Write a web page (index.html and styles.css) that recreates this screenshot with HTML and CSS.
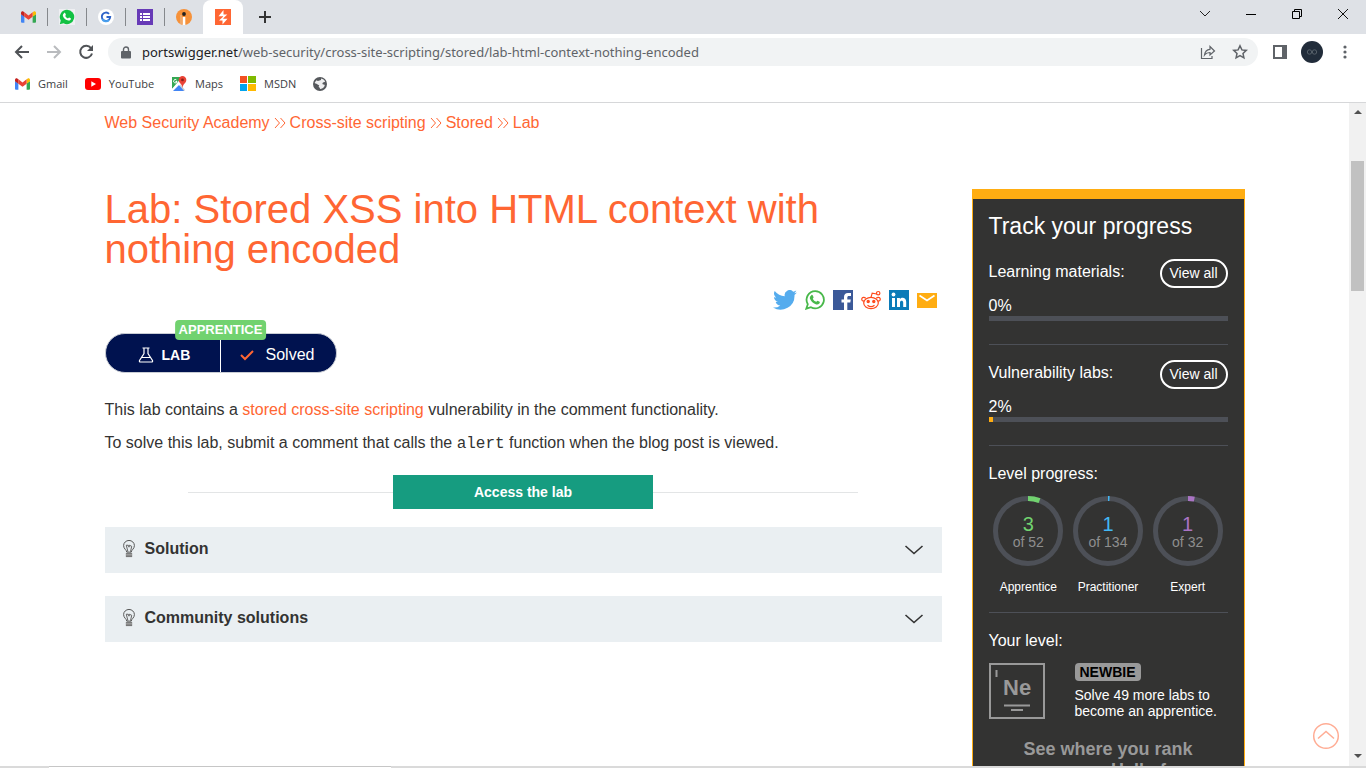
FILE: index.html
```html
<!DOCTYPE html>
<html lang="en">
<head>
<meta charset="utf-8">
<meta name="viewport" content="width=device-width, initial-scale=1">
<title>Lab: Stored XSS into HTML context with nothing encoded</title>
<link rel="stylesheet" href="styles.css">
</head>
<body>
<svg class="defs" aria-hidden="true">
  <symbol id="gmail" viewBox="0 0 16 12">
    <path fill="#4285f4" d="M1 12h2.600V5.500L0 2.800V11a1 1 0 0 0 1 1z"/>
    <path fill="#34a853" d="M12.400 12H15a1 1 0 0 0 1-1V2.800l-3.600 2.700z"/>
    <path fill="#fbbc04" d="M12.400 1v4.800L16 3V1.600C16 .2 14.400-.5 13.300.3z"/>
    <path fill="#ea4335" d="M3.600 5.800V1L8 4.300 12.400 1v4.800L8 9z"/>
    <path fill="#c5221f" d="M0 1.600V3l3.600 2.800V1L2.700.3C1.600-.5 0 .2 0 1.600z"/>
  </symbol>
  <symbol id="phone" viewBox="0 0 20 20">
    <path d="M6.300 5.200c.5-.6 1.200-.4 1.500.2l.8 1.800c.1.400-.7 1.200-.8 1.500.7 1.500 1.900 2.500 3.400 3.100.3 0 1-1.200 1.400-1.100l2 1c.5.3.1 1.500-.3 1.900-1 .9-2.300 1-3.600.6-2.700-.8-5-3-5.800-5.600-.3-1.300.3-2.500 1.400-3.400z"/>
  </symbol>
  <symbol id="bulb" viewBox="0 0 14 20">
    <path d="M4.500 13.500c0-2.500-3.500-3.500-3.500-7.300a6 5.700 0 0 1 12 0c0 3.800-3.500 4.800-3.500 7.300z" fill="none" stroke="#555" stroke-width="1.100"/>
    <path d="M5.800 13 4 5.800h2.200L7 8l.5-2.200L10 7l-1.300 6" fill="none" stroke="#555" stroke-width="1"/>
    <path d="M3.500 14.500h7V19h-7z" fill="#777"/><path d="M3.500 16.500h7" stroke="#ccc" stroke-width=".7"/>
  </symbol>
  <symbol id="chevron" viewBox="0 0 20 12"><path d="M1.500 2 10 9.500 18.500 2" fill="none" stroke="#333" stroke-width="1.600"/></symbol>
  <symbol id="raquo" viewBox="0 0 12 12"><path d="M1 1l4.500 5L1 11M6.500 1 11 6l-4.500 5" fill="none" stroke="#ff6633" stroke-width="1"/></symbol>
</svg>

<div class="window">
  <header class="chrome">
    <div class="tabstrip">
      <div class="tabs">
        <button class="tab" aria-label="Gmail"><svg width="15" height="12"><use href="#gmail"/></svg></button>
        <button class="tab" aria-label="WhatsApp"><svg width="16" height="16" viewBox="0 0 20 20"><path fill="#fff" d="M0 20V0h20v20z" opacity=".5"/><path fill="#12c143" d="M10 1a9 9 0 1 1-4.300 16.900L1 19l1.200-4.500A9 9 0 0 1 10 1z"/><use href="#phone" fill="#fff"/></svg></button>
        <button class="tab" aria-label="Google account"><svg width="16" height="16" viewBox="0 0 16 16"><circle cx="8" cy="8" r="8" fill="#fff"/><path d="M11 4.800A4.200 4.200 0 1 0 12.200 8H8.500" fill="none" stroke="#2d62c8" stroke-width="1.900"/><path d="M4.200 10A4.200 4.200 0 0 0 11 11" fill="none" stroke="#4aa0ee" stroke-width="1.900"/></svg></button>
        <button class="tab" aria-label="Forms"><svg width="16" height="16" viewBox="0 0 16 16"><path fill="#673ab7" d="M0 0h16v16H0z"/><path fill="#fff" d="M3 4h2v2H3zm3 0h7v2H6zM3 7h2v2H3zm3 0h7v2H6zm-3 3h2v2H3zm3 0h7v2H6z"/></svg></button>
        <button class="tab" aria-label="Info"><svg width="16" height="16" viewBox="0 0 16 16"><circle cx="8" cy="8" r="8" fill="#f69139"/><circle cx="8" cy="5" r="1.900" fill="#222"/><path fill="#fff" d="M6.700 8h2.600v8H6.700z"/><path fill="#dcdfe3" d="M4.500 6h1v9h-1z" opacity=".6"/></svg></button>
        <button class="tab tab-active" aria-label="PortSwigger"><svg width="16" height="16" viewBox="0 0 16 16"><path fill="#ff6633" d="M0 0h16v16H0z"/><path fill="#fff" d="M8.500 1v4.500h3.800L8 9.500V7.200H3.500zM7.500 15.500V11.500H4L8.300 7.500v2.300h4.200z"/></svg></button>
      </div>
      <button class="icon-btn newtab" aria-label="New tab"><svg width="12" height="12"><path d="M6 0v12M0 6h12" stroke="#333" stroke-width="2"/></svg></button>
      <div class="controls">
        <button class="icon-btn" aria-label="Search tabs"><svg width="12" height="12"><path d="m1 3 5 5 5-5" fill="none" stroke="#222"/></svg></button>
        <button class="icon-btn" aria-label="Minimize"><svg width="10" height="12"><path d="M0 6.500h10" stroke="#000"/></svg></button>
        <button class="icon-btn" aria-label="Restore"><svg width="10" height="10"><path d="M.5 2.500h7v7h-7zM2.500 2.500v-2h7v7h-2" fill="none" stroke="#000"/></svg></button>
        <button class="icon-btn" aria-label="Close"><svg width="12" height="12"><path d="m1 1 10 10M11 1 1 11" stroke="#111"/></svg></button>
      </div>
    </div>

    <div class="toolbar">
      <button class="icon-btn" aria-label="Back"><svg width="16" height="14"><path d="M15 7H2M8 1 2 7l6 6" fill="none" stroke="#505357" stroke-width="2"/></svg></button>
      <button class="icon-btn" aria-label="Forward"><svg width="16" height="14"><path d="M1 7h13M8 1l6 6-6 6" fill="none" stroke="#b9bbbe" stroke-width="2"/></svg></button>
      <button class="icon-btn" aria-label="Reload"><svg width="16" height="16"><path d="M13 4.200A6 6 0 1 0 14 9.500" fill="none" stroke="#505357" stroke-width="2"/><path fill="#505357" d="M15 1v6H9z"/></svg></button>
      <div class="omnibox">
        <svg width="10" height="13"><path fill="#5f6368" d="M1 5h8a1 1 0 0 1 1 1v5.500a1 1 0 0 1-1 1H1a1 1 0 0 1-1-1V6a1 1 0 0 1 1-1z"/><path d="M2.500 5.500V3.500a2.500 2.500 0 0 1 5 0v2" fill="none" stroke="#5f6368" stroke-width="1.400"/></svg>
        <div class="url" role="textbox" aria-label="Address"><span class="host">portswigger.net</span>/web-security/cross-site-scripting/stored/lab-html-context-nothing-encoded</div>
        <button class="icon-btn" aria-label="Share"><svg width="16" height="16" fill="none" stroke="#5f6368" stroke-width="1.200"><path d="M1.500 4v10.500h10.500V12"/><path d="M4.500 11C5 7 7 5.500 10 5.300V2.500L14.500 7 10 11V8.500C7.500 8.500 6 9 4.500 11z"/></svg></button>
        <button class="icon-btn" aria-label="Bookmark"><svg width="16" height="16"><path d="m8 1.800 1.900 4.100 4.400.5-3.300 3 .9 4.400L8 11.600l-3.900 2.200.9-4.400-3.300-3 4.400-.5z" fill="none" stroke="#5f6368" stroke-width="1.500"/></svg></button>
      </div>
      <div class="tools">
        <button class="icon-btn" aria-label="Side panel"><svg width="14" height="14"><path fill="#5f6368" d="M0 0h14v14H0z"/><path fill="#fff" d="M2 2h7v10H2z"/></svg></button>
        <button class="icon-btn" aria-label="Profile"><svg width="22" height="22"><circle cx="11" cy="11" r="11" fill="#212c3a"/><circle cx="8.500" cy="11" r="2.200" fill="none" stroke="#566069"/><circle cx="13.500" cy="11" r="2.200" fill="none" stroke="#566069"/></svg></button>
        <button class="icon-btn" aria-label="Menu"><svg width="4" height="14" fill="#5f6368"><circle cx="2" cy="2" r="1.600"/><circle cx="2" cy="7" r="1.600"/><circle cx="2" cy="12" r="1.600"/></svg></button>
      </div>
    </div>

    <nav class="bookmarks" aria-label="Bookmarks">
      <a href="#"><svg width="15" height="12"><use href="#gmail"/></svg>Gmail</a>
      <a href="#"><svg width="16" height="12"><rect width="16" height="12" rx="3" fill="#f00"/><path fill="#fff" d="m6.300 3.200 4.700 2.800-4.700 2.800z"/></svg>YouTube</a>
      <a href="#"><svg width="16" height="16" viewBox="0 0 16 16"><path fill="#34a853" d="M1 1h10L1 13z"/><path fill="#fff" d="M0 14 11 3l2 2L3 16z"/><path fill="#c8ccd0" d="M9 8l5 6-1 1H10z"/><path fill="#4285f4" d="M2 15l6-6 5 6z"/><path d="M5.500 4A1.700 1.700 0 1 0 6 5.500H4.500" fill="none" stroke="#fff"/><path fill="#ea4335" d="M11.500 0A3.800 3.800 0 0 1 15.300 4c0 3-3.200 3.500-3.800 8C11 7.500 7.700 7 7.700 4A3.800 3.800 0 0 1 11.500 0z"/><circle cx="11.500" cy="3.900" r="1.400" fill="#8c2118"/></svg>Maps</a>
      <a href="#"><svg width="16" height="16"><path fill="#f25022" d="M0 0h7v7H0z"/><path fill="#7fba00" d="M8 0h8v7H8z"/><path fill="#00a4ef" d="M0 8h7v7H0z"/><path fill="#ffb900" d="M8 8h8v7H8z"/></svg>MSDN</a>
      <a href="#" aria-label="Web page"><svg width="14" height="14"><circle cx="7" cy="7" r="7" fill="#55585c"/><path fill="#fff" d="M8 1.500c2 .3 3.500 1.500 4.200 3-1 .8-2 .5-2.600 1.500-.6 1 .4 1.500 1.400 1.500.8 0 1 1 .3 2-.8 1.500-2.300 2.500-4.300 2.600 0-1-.2-1.500-1-1.800-.5-.3-.3-1.300.3-1.800L3 6.500c-.7-.2-1.400-.5-1.300-.8.5-1 1-1.700 1.800-2.500.7.600 1.500 1 2.200.6L8 3z" opacity=".9"/></svg></a>
    </nav>
  </header>

  <div class="viewport">
    <div class="page">
      <nav class="crumbs" aria-label="Breadcrumb">
        <a href="#">Web Security Academy</a><svg width="12" height="12"><use href="#raquo"/></svg><a href="#">Cross-site scripting</a><svg width="12" height="12"><use href="#raquo"/></svg><a href="#">Stored</a><svg width="12" height="12"><use href="#raquo"/></svg><a href="#">Lab</a>
      </nav>
      <div class="columns">
        <main>
          <h1>Lab: Stored XSS into HTML context with nothing encoded</h1>
          <div class="share">
            <a href="#" aria-label="Twitter"><svg width="24" height="20" viewBox="0 0 24 20"><path fill="#55acee" d="M24 2.400a10 10 0 0 1-2.800.8A4.900 4.900 0 0 0 23.300.5a10 10 0 0 1-3.100 1.200 4.900 4.900 0 0 0-8.400 4.500A14 14 0 0 1 1.700 1a4.900 4.900 0 0 0 1.500 6.600 5 5 0 0 1-2.200-.6c0 2.300 1.600 4.400 3.900 4.900a5 5 0 0 1-2.200.1 4.900 4.900 0 0 0 4.600 3.400A10 10 0 0 1 0 17.500 14 14 0 0 0 21.500 5z"/></svg></a>
            <a href="#" aria-label="WhatsApp"><svg width="20" height="20" viewBox="0 0 20 20"><path fill="none" stroke="#48b84a" stroke-width="1.800" d="M10.200 1.200a8.600 8.600 0 1 1-4.300 16L1.300 18.700l1.500-4.500a8.600 8.600 0 0 1 7.400-13z"/><use href="#phone" fill="#48b84a"/></svg></a>
            <a href="#" aria-label="Facebook"><svg width="20" height="20"><path fill="#3b5998" d="M0 0h20v20H0z"/><path fill="#fff" d="M11 20v-7.500H8.500v-3H11V7c0-2.600 1.600-4 3.900-4H18v3h-2c-1.300 0-1.700.6-1.700 1.600v1.900h3.500l-.5 3h-3V20z"/></svg></a>
            <a href="#" aria-label="Reddit"><svg width="20" height="20" fill="none" stroke="#ff4a1c" stroke-width="1.200"><ellipse cx="10" cy="13" rx="7.300" ry="5.600"/><path d="M3.400 10.800C1.700 11.500.5 10.200.8 8.800c.5-1.600 2.500-1.900 3.900-.6M16.600 10.800c1.700.7 2.900-.6 2.600-2-.5-1.600-2.500-1.900-3.900-.6M10 7.400l1.200-4.200 4.600.8M6.500 15.200c2 1.700 5 1.700 7 0"/><circle cx="17.200" cy="3.200" r="1.700"/><circle cx="7.200" cy="11.500" r="1.100" fill="#ff4a1c"/><circle cx="12.800" cy="11.500" r="1.100" fill="#ff4a1c"/></svg></a>
            <a href="#" aria-label="LinkedIn"><svg width="20" height="20"><path fill="#0b7bb8" d="M0 0h20v20H0z"/><circle cx="4.500" cy="4.500" r="1.900" fill="#fff"/><path fill="#fff" d="M3 8h3v9H3zM8 8h2.900v1.300c1.500-2.400 6.300-2 6.300 2.500V17h-3v-4.500c0-2.500-3.200-2.400-3.200 0V17H8z"/></svg></a>
            <a href="#" aria-label="Email"><svg width="20" height="20"><rect y="3" width="20" height="15" fill="#ffad12"/><path d="m2.500 5.500 7.500 5 7.500-5" fill="none" stroke="#fff" stroke-width="1.800"/></svg></a>
          </div>
          <div class="lab-status">
            <span class="level">APPRENTICE</span>
            <div class="half kind"><svg width="16" height="16"><path d="M4.500 1h7M6 1v5.500L1.500 13.500q-.5 1.500 1 1.500h11q1.500 0 1-1.500L10 6.500V1M3.500 10.500h9" fill="none" stroke="#fff" stroke-width="1.200"/></svg>LAB</div>
            <div class="half state"><svg width="14" height="12"><path d="m1 6 4 4 8-8" fill="none" stroke="#ff6633" stroke-width="2"/></svg>Solved</div>
          </div>
          <p>This lab contains a <a href="#">stored cross-site scripting</a> vulnerability in the comment functionality.</p>
          <p>To solve this lab, submit a comment that calls the <code>alert</code> function when the blog post is viewed.</p>
          <div class="access"><a href="#">Access the lab</a></div>
          <button class="accordion"><svg width="14" height="18"><use href="#bulb"/></svg><span>Solution</span><svg class="arrow" width="20" height="12"><use href="#chevron"/></svg></button>
          <button class="accordion"><svg width="14" height="18"><use href="#bulb"/></svg><span>Community solutions</span><svg class="arrow" width="20" height="12"><use href="#chevron"/></svg></button>
        </main>
        <aside>
          <h2>Track your progress</h2>
          <section>
            <div class="row"><span id="learn">Learning materials:</span><a class="pill" href="#">View all</a></div>
            <div class="percent">0%</div>
            <div class="bar" role="progressbar" aria-labelledby="learn" aria-valuenow="0"><div style="width:0%"></div></div>
          </section>
          <section>
            <div class="row"><span id="labs">Vulnerability labs:</span><a class="pill" href="#">View all</a></div>
            <div class="percent">2%</div>
            <div class="bar" role="progressbar" aria-labelledby="labs" aria-valuenow="2"><div style="width:2%"></div></div>
          </section>
          <section class="levels-section">
            <div>Level progress:</div>
            <div class="levels">
              <div class="gauge-item"><div class="gauge apprentice"><svg viewBox="0 0 70 70"><circle class="track" cx="35" cy="35" r="32.500"/><circle class="fill" cx="35" cy="35" r="32.500" pathLength="52" stroke-dasharray="3 52"/></svg><b>3</b><small>of 52</small></div><span>Apprentice</span></div>
              <div class="gauge-item"><div class="gauge practitioner"><svg viewBox="0 0 70 70"><circle class="track" cx="35" cy="35" r="32.500"/><circle class="fill" cx="35" cy="35" r="32.500" pathLength="134" stroke-dasharray="1 134"/></svg><b>1</b><small>of 134</small></div><span>Practitioner</span></div>
              <div class="gauge-item"><div class="gauge expert"><svg viewBox="0 0 70 70"><circle class="track" cx="35" cy="35" r="32.500"/><circle class="fill" cx="35" cy="35" r="32.500" pathLength="32" stroke-dasharray="1 32"/></svg><b>1</b><small>of 32</small></div><span>Expert</span></div>
            </div>
          </section>
          <section class="your-level">
            <div>Your level:</div>
            <div class="rank">
              <svg width="56" height="56" role="img" aria-label="Newbie"><path d="M1 1h54v54H1z" fill="none" stroke="#999" stroke-width="2"/><path d="M7.500 7v7M15 42.500h26M22 47h12" stroke="#999" stroke-width="2"/><text x="14" y="32">Ne</text></svg>
              <div><span class="badge">NEWBIE</span><p>Solve 49 more labs to become an apprentice.</p></div>
            </div>
          </section>
          <a class="hall" href="#">See where you rank<br>on our Hall of</a>
        </aside>
      </div>
    </div>
    <a class="to-top" href="#" aria-label="Back to top"><svg width="28" height="28" fill="none" stroke="#ffad95" stroke-width="1.500"><circle cx="14" cy="14" r="12.300"/><path d="m6 16.500 8-7 8 7"/></svg></a>
    <div class="scrollbar" aria-hidden="true">
      <svg width="8" height="5"><path fill="#505050" d="M0 5 4 1l4 4z"/></svg>
      <div class="thumb"></div>
      <svg width="8" height="5"><path fill="#505050" d="m0 0 4 4 4-4z"/></svg>
    </div>
  </div>
  <footer class="taskbar"><div></div></footer>
</div>
</body>
</html>
```
FILE: styles.css
```css
* { box-sizing: border-box; }
body { margin: 0; font: 16px/18px "Liberation Sans", Arial, sans-serif; color: #333332; background: #fff; }
a { color: #ff6633; text-decoration: none; }
button { border: 0; background: none; padding: 0; font: inherit; color: inherit; }
svg { display: block; flex: none; }
.defs { position: absolute; width: 0; height: 0; }
.window { height: 100vh; display: flex; flex-direction: column; overflow: hidden; }

/* Browser frame */
.chrome { flex: none; border-bottom: 1px solid #d6d7d9; font-family: "Noto Sans", "Open Sans", sans-serif; }
.icon-btn { display: flex; align-items: center; justify-content: center; }
.tabstrip { height: 34px; display: flex; align-items: center; background: #dee1e6; padding-left: 9px; }
.tabs { display: flex; align-self: stretch; align-items: center; }
.tab { width: 39px; height: 18px; display: flex; align-items: center; justify-content: center; border-right: 1px solid #85888c; }
.tab:nth-last-child(2) { border-right: 0; width: 38px; padding-right: 1px; }
.tab-active { width: 40px; height: 34px; border: 0; background: #fff; border-radius: 8px 8px 0 0; }
.newtab { margin-left: 16px; }
.controls { margin-left: auto; display: flex; padding-bottom: 6px; }
.controls .icon-btn { width: 46px; height: 28px; }
.toolbar { height: 36px; display: flex; align-items: center; gap: 16px; padding: 0 19px 0 14px; }
.omnibox { flex: 1; min-width: 0; height: 28px; margin: 0 -1px 0 -2px; display: flex; align-items: center; padding: 0 10px 0 13px; background: #f1f3f4; border-radius: 14px; }
.url { flex: 1; min-width: 0; margin-left: 11px; overflow: hidden; white-space: nowrap; font-size: 13px; color: #5f6368; }
.host { color: #202124; }
.omnibox .icon-btn + .icon-btn { margin-left: 16px; }
.tools { display: flex; align-items: center; gap: 14px; }
.tools .icon-btn:last-child { margin-left: 6px; }
.bookmarks { height: 32px; display: flex; align-items: center; gap: 17px; padding: 0 15px 4px; font-family: "Open Sans", "Noto Sans", sans-serif; font-size: 11px; }
.bookmarks a { display: flex; align-items: center; gap: 8px; color: #3c4043; }

/* Page */
.viewport { flex: 1; min-height: 0; display: flex; position: relative; overflow: hidden; }
.page { flex: 1; min-width: 0; padding: 11px 24px 0; overflow: hidden; }
.crumbs, .columns { max-width: 1140px; margin: 0 auto; }
.crumbs { display: flex; align-items: center; gap: 4px; }
.columns { display: grid; grid-template-columns: minmax(0, 1fr) 273px; gap: 30px; align-items: start; padding-top: 57px; }
h1 { margin: 0; font-size: 40px; line-height: 40px; font-weight: 400; color: #ff6633; }
.share { display: flex; justify-content: flex-end; align-items: center; gap: 8px; padding: 21px 5px 0 0; }
.lab-status { position: relative; width: 232px; height: 40px; margin: 23px 0 28px; display: grid; grid-template-columns: 1fr 1fr; background: #00124f; border: 1px solid #c9cdd4; border-radius: 20px; color: #fff; }
.level { position: absolute; top: -14px; left: 50%; transform: translateX(-50%); padding: 1px 4px; border-radius: 4px; background: #71d26f; font-size: 13px; font-weight: 700; }
.half { display: flex; align-items: center; padding-top: 4px; }
.kind { padding-left: 32px; gap: 8px; font-size: 14px; font-weight: 700; border-right: 1px solid #fff; }
.state { padding-left: 19px; gap: 12px; }
main p { margin: 0 0 15px; }
code { font: 16px/18px "Liberation Mono", "Courier New", monospace; }
.access { display: grid; grid-template-columns: 1fr 260px 1fr; align-items: center; width: 80%; margin: 22px auto 18px; }
.access::before, .access::after { content: ""; height: 1px; background: #e3e5e6; }
.access a { padding: 8px; text-align: center; background: #169c80; color: #fff; font-size: 14px; font-weight: 700; }
.accordion { display: flex; align-items: center; width: 100%; height: 46px; margin-bottom: 23px; padding: 0 18px 3px 17px; background: #eaeff2; font-weight: 700; text-align: left; }
.accordion span { flex: 1; margin-left: 9px; }
.arrow { margin-top: 3px; }

/* Progress panel */
aside { padding: 14px 16px 0; border: 1px solid #ffad12; border-top-width: 10px; background: #333332; color: #fff; }
h2 { margin: 0 0 19px; font-size: 23px; line-height: 27px; font-weight: 400; }
section { border-bottom: 1px solid #4d5057; margin-bottom: 15px; padding-bottom: 23px; }
.row { display: flex; justify-content: space-between; align-items: flex-start; }
.row span { padding-top: 4px; }
.pill { padding: 4px 8px; border: 2px solid #fff; border-radius: 15px; color: #fff; font-size: 14px; line-height: 17px; }
.percent { padding-top: 9px; }
.bar { height: 5px; margin-top: 1px; background: #4d5057; }
.bar div { height: 5px; background: #ffad12; }
.levels-section { padding: 4px 0 16px; }
.levels { display: grid; grid-template-columns: repeat(3, 1fr); margin-top: 13px; }
.gauge-item { display: flex; flex-direction: column; align-items: center; gap: 12px; font-size: 12px; }
.gauge { position: relative; width: 70px; height: 70px; display: flex; flex-direction: column; align-items: center; padding-top: 18px; }
.gauge svg { position: absolute; inset: 0; transform: rotate(-90deg); }
.gauge circle { fill: none; stroke-width: 5; }
.track { stroke: #4d5057; }
.fill { stroke: currentColor; }
.gauge b { font-size: 20px; line-height: 20px; font-weight: 400; }
.gauge small { font-size: 14px; line-height: 16px; color: #8e8e8e; }
.apprentice { color: #71d26f; }
.practitioner { color: #42b8f5; }
.expert { color: #aa74c4; }
.your-level { padding: 4px 0 0; border: 0; }
.rank { display: flex; gap: 30px; margin-top: 13px; }
.rank text { fill: #999; font-size: 22px; font-weight: 700; }
.rank p { margin: 6px 0 0; font-size: 14px; line-height: 16px; }
.badge { display: table; padding: 0 5px; border-radius: 4px; background: #999; color: #000; font-size: 14px; font-weight: 700; }
.hall { display: block; text-align: center; margin-top: 20px; font-size: 18px; line-height: 21px; font-weight: 700; color: #999; }
.to-top { position: absolute; right: 26px; bottom: 16px; }
.scrollbar { width: 17px; display: flex; flex-direction: column; align-items: center; background: #f1f1f1; padding: 6px 0 7px; }
.thumb { width: 13px; height: 20%; margin: 47px 0 auto; background: #c1c1c1; }
.taskbar { flex: none; height: 2px; background: #dadada; padding-left: 49px; }
.taskbar div { width: 342px; height: 2px; background: #fff; border-top: 1px solid #c6c6c6; }
```
